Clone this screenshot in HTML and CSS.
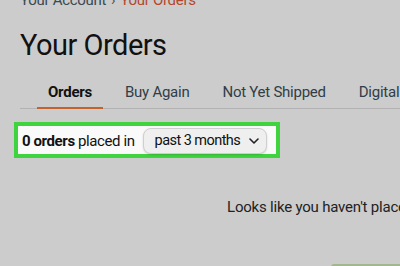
FILE: index.html
```html
<!DOCTYPE html>
<html lang="en">
<head>
<meta charset="utf-8">
<title>Your Orders</title>
<link rel="stylesheet" href="styles.css">
</head>
<body>
<div class="page">
  <nav class="crumbs">
    <span class="crumb">Your Account</span>
    <span class="sep">›</span>
    <span class="crumb-current">Your Orders</span>
  </nav>
  <h1 class="title">Your Orders</h1>
  <div class="tabs">
    <span class="tab active">Orders</span>
    <span class="tab">Buy Again</span>
    <span class="tab">Not Yet Shipped</span>
    <span class="tab">Digital Orders</span>
  </div>
  <div class="filter">
    <span class="count"><b>0 orders</b> placed in</span>
    <span class="select">past 3 months
      <svg class="chev" width="10" height="6" viewBox="0 0 10 6"><path d="M1 1 L5 5 L9 1" fill="none" stroke="#222" stroke-width="1.6" stroke-linecap="round" stroke-linejoin="round"/></svg>
    </span>
  </div>
  <p class="empty">Looks like you haven't placed an order in the last 3 months.</p>
  <div class="cta"></div>
</div>
</body>
</html>
```

FILE: styles.css
```css
html, body {
  margin: 0;
  padding: 0;
  overflow: hidden;
}
body {
  background: #cccccc;
  font-family: Roboto, "Open Sans", sans-serif;
  color: #111;
  width: 400px;
  height: 266px;
}
.page {
  padding-left: 20px;
}
.crumbs {
  margin-top: -9px;
  font-size: 15px;
  line-height: 18px;
  height: 18px;
  white-space: nowrap;
  display: flex;
  gap: 5px;
  letter-spacing: -0.3px;
}
.crumb { color: #3b4a54; }
.sep { color: #555; }
.crumb-current { color: #b4472f; }
.title {
  margin: 19px 0 0 0;
  font-size: 29px;
  font-weight: 400;
  line-height: 34px;
  letter-spacing: -0.5px;
  color: #111;
}
.tabs {
  margin-top: 21px;
  display: flex;
  gap: 11px;
  white-space: nowrap;
  border-bottom: 1px solid #b2b2b2;
  padding-left: 17px;
  width: 500px;
}
.tab {
  font-size: 15px;
  line-height: 18px;
  padding: 0 11px 6px;
  color: #2f3e48;
  border-bottom: 2px solid transparent;
  margin-bottom: -1px;
  letter-spacing: -0.25px;
}
.tab.active {
  font-weight: 700;
  color: #111;
  border-bottom-color: #c4622d;
}
.filter {
  margin: 13px 0 0 -6px;
  display: inline-flex;
  align-items: center;
  gap: 8px;
  border: 4px solid #3fd43f;
  background: #fafafa;
  padding: 1px 9px 0 4px;
  height: 27px;
  box-sizing: content-box;
}
.count {
  font-size: 15px;
  line-height: 18px;
  color: #111;
  letter-spacing: -0.4px;
}
.count b { font-weight: 700; }
.select {
  display: flex;
  align-items: center;
  gap: 9px;
  height: 24px;
  padding: 0 7px 0 11px;
  border: 1px solid #cfcfcf;
  border-radius: 8px;
  background: #efefef;
  box-shadow: 0 1px 2px rgba(0,0,0,0.15);
  font-size: 14.5px;
  color: #111;
  letter-spacing: -0.55px;
}
.chev { display: block; }
.empty {
  margin: 40px 0 0 0;
  padding-left: 207px;
  font-size: 15px;
  line-height: 18px;
  color: #222;
  white-space: nowrap;
  letter-spacing: -0.2px;
}
.cta {
  margin: 48px 0 0 311px;
  width: 100px;
  height: 20px;
  background: #a2b78f;
  border-radius: 3px 0 0 0;
}
```
